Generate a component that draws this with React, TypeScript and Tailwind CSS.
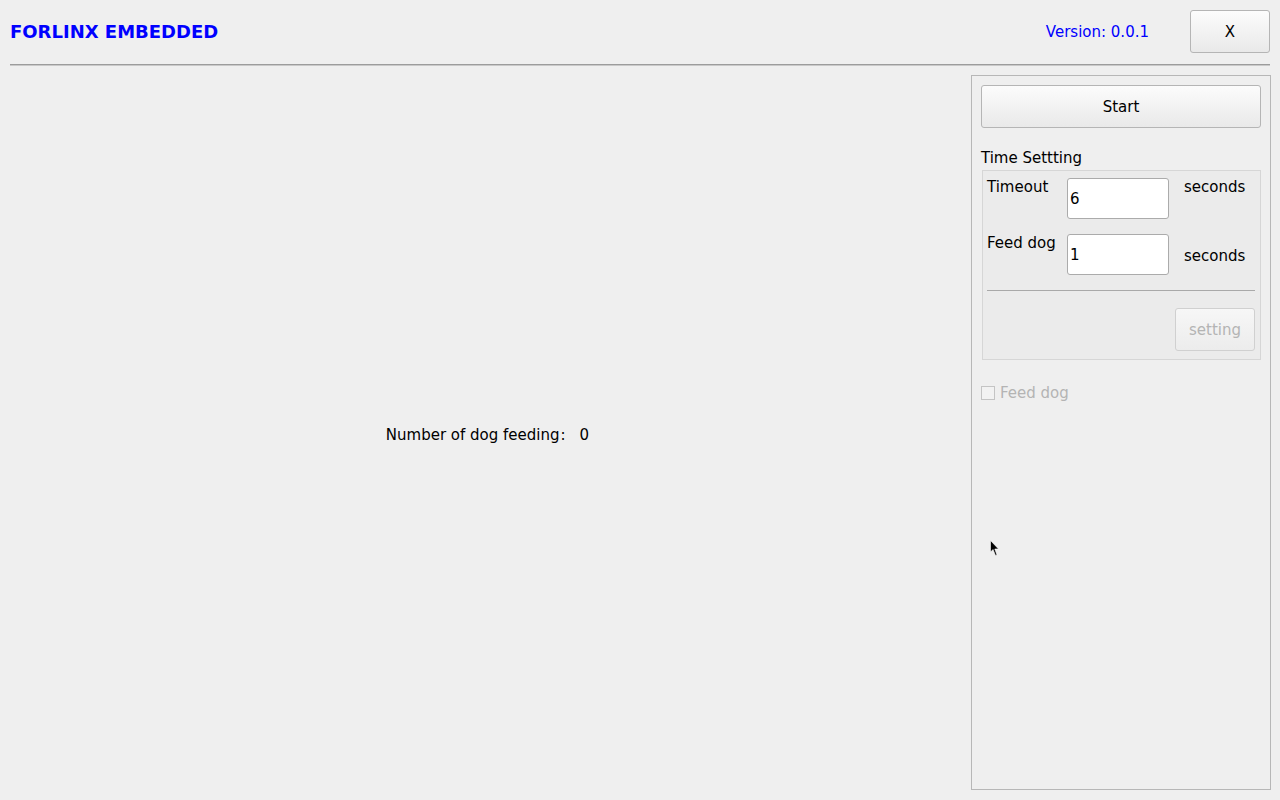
import React from "react";

const font = { fontFamily: '"DejaVu Sans", "Noto Sans CJK SC", sans-serif' };

const QtButton = ({ label, disabled, className = "" }: { label: string; disabled?: boolean; className?: string }) => (
  <button
    className={`flex items-center justify-center rounded-[3px] border bg-gradient-to-b pt-[2px] text-[15px] ${
      disabled
        ? "border-[#d0d0d0] from-[#f7f7f7] to-[#ececec] text-[#b4b4b4]"
        : "border-[#b5b5b5] from-[#fcfcfc] to-[#e9e9e9] text-black"
    } ${className}`}
  >
    {label}
  </button>
);

const SpinField = ({ value }: { value: string }) => (
  <div className="flex h-[41px] w-[102px] items-center rounded-[3px] border border-[#ababab] bg-white pl-[2px] pt-[1px] text-[15px] text-black">
    {value}
  </div>
);

const SettingsPanel = () => (
  <aside className="flex w-[300px] flex-col border border-[#b7b7b7] px-[9px] pt-[9px]">
    <QtButton label="Start" className="h-[43px] w-[280px]" />

    <div className="mt-[21px] text-[15px] leading-[18px] text-black">Time Settting</div>

    {/* time settings group */}
    <div className="ml-[1px] mt-[3px] w-[279px] border border-[#d6d6d6] bg-[#ebebeb] px-[4px] pb-[8px] pt-[7px]">
      <div className="flex">
        <span className="w-[80px] text-[15px] leading-[18px] text-black">Timeout</span>
        <SpinField value="6" />
        <span className="ml-[15px] text-[15px] leading-[18px] text-black">seconds</span>
      </div>
      <div className="mt-[15px] flex">
        <span className="w-[80px] text-[15px] leading-[18px] text-black">Feed dog</span>
        <SpinField value="1" />
        <span className="ml-[15px] self-center pt-[2px] text-[15px] leading-[18px] text-black">seconds</span>
      </div>
      <div className="mt-[15px] h-px w-[268px] bg-[#a9a9a9]" />
      <div className="mt-[17px] flex justify-end pr-[1px]">
        <QtButton label="setting" disabled className="h-[43px] w-[80px]" />
      </div>
    </div>

    <label className="mt-[24px] flex items-center gap-[5px] text-[15px] leading-[18px] text-[#b4b4b4]">
      <span className="h-[14px] w-[14px] border border-[#c4c4c4] bg-[#f2f2f2]" />
      Feed dog
    </label>
  </aside>
);

export default function App() {
  return (
    <div className="relative flex h-[800px] w-[1280px] flex-col bg-[#efefef]" style={font}>
      {/* header */}
      <header className="mt-[10px] flex h-[43px] items-center pl-[10px] pr-[10px]">
        <h1 className="text-[18px] font-bold text-[#0000ff]">FORLINX EMBEDDED</h1>
        <span className="ml-auto mr-[41px] pt-[2px] text-[15px] text-[#0000ff]">Version: 0.0.1</span>
        <QtButton label="X" className="h-[43px] w-[80px]" />
      </header>

      <div className="mx-[10px] mt-[11px] h-px bg-[#9c9c9c]" />
      <div className="mx-[10px] h-px bg-[#c9c9c9]" />

      <main className="mb-[10px] mt-[9px] flex flex-1 pl-[10px] pr-[9px]">
        <section className="flex flex-1 items-center justify-center pr-[6px] pt-[5px]">
          <span className="text-[15px] text-black">Number of dog feeding</span>
          <span className="ml-[1px] text-[15px] text-black">:</span>
          <span className="ml-[14px] text-[15px] text-black">0</span>
        </section>
        <SettingsPanel />
      </main>

      {/* mouse pointer */}
      <svg className="absolute left-[990px] top-[540px]" width="11" height="17" viewBox="0 0 11 17">
        <path d="M0.5 0.5 L0.5 12 L3 9.5 L5.5 15.5 L7 15 L4.8 9 L8.5 9 Z" fill="#000" stroke="#fff" strokeWidth="0.6" />
      </svg>
    </div>
  );
}
